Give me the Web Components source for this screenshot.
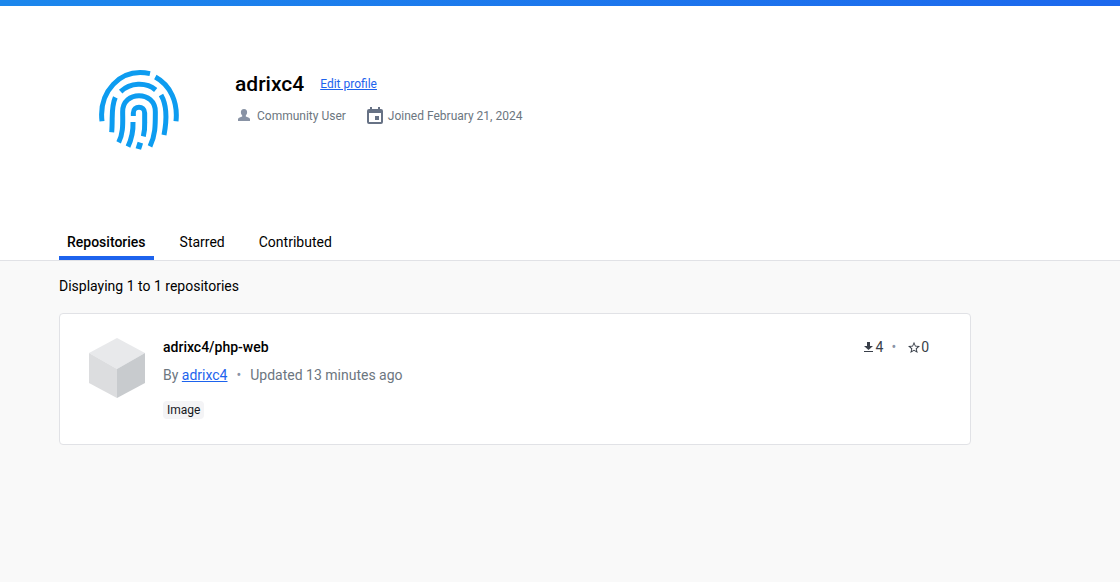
<!DOCTYPE html>
<html lang="en">
<head>
<meta charset="utf-8">
<title>adrixc4's Profile</title>
<style>
html{height:100%}
body{margin:0;min-height:100%;background:#f9f9f9;color:#000;font-family:Roboto,"Liberation Sans",sans-serif;font-size:14px;line-height:20px}
</style>
</head>
<body>
<profile-page></profile-page>
<script>
const define = (name, html) => {
  const template = document.createElement('template');
  template.innerHTML = html;
  customElements.define(name, class extends HTMLElement {
    constructor() {
      super();
      this.attachShadow({ mode: 'open' }).append(template.content.cloneNode(true));
    }
  });
};

define('user-avatar', `
<style>:host{display:block;width:80px;height:80px}svg{display:block;width:100%;height:100%}</style>
<svg viewBox="27 30 240 240" fill="none" stroke="#0d9cf0" stroke-width="15" role="img" aria-label="Fingerprint">
  <path d="M36 184 C26 98 88 22 180 41"/>
  <path d="M196 51 C242 76 264 127 258 184"/>
  <path d="M92 95 C120 68 168 65 197 90"/>
  <path d="M76 112 C62 142 69 173 65 217"/>
  <path d="M213 105 C232 137 231 178 222 225"/>
  <path d="M86 247 C101 218 98 187 98 155 C98 91 196 91 196 155 C196 192 197 225 180 259"/>
  <path d="M114 260 C127 232 130 212 129 186"/>
  <path d="M130 168 V159 C130 136 164 136 164 159 V188 Q165 210 160 229"/>
  <path d="M151 248 L145 267" stroke-width="17"/>
</svg>`);

define('profile-header', `
<style>
:host{display:flex;gap:56px;padding:64px 40px 72px}
.info{display:flex;flex-direction:column;gap:8px}
.line{display:flex;align-items:center;gap:16px}
h1{margin:0;font-size:21px;line-height:28px;font-weight:500}
a{color:#1d63ed;font-size:12px}
.meta{gap:20px;font-size:12px;color:#6c7680}
.meta span{display:flex;align-items:center;gap:4px}
svg{display:block;width:18px;height:18px}
</style>
<user-avatar></user-avatar>
<div class="info">
  <div class="line"><h1><slot name="name"></slot></h1><a href="#edit">Edit profile</a></div>
  <div class="line meta">
    <span><svg viewBox="0 0 18 18" fill="#8993a5" aria-hidden="true"><path d="M9 2c2.200 0 3.300 1.600 3.100 3.500-.1 1.300-.6 2.200-1.300 2.900v1.200c1.600.7 3.700 1.200 4.200 2.400V14H3v-2c.5-1.200 2.600-1.700 4.200-2.400V8.400C6.500 7.700 6 6.800 5.900 5.500 5.700 3.600 6.800 2 9 2z"/></svg><slot name="role"></slot></span>
    <span><svg viewBox="0 0 18 18" fill="#677285" aria-hidden="true"><path fill-rule="evenodd" d="M4 0h2v2h6V0h2v2h1q2 0 2 2v11q0 2-2 2H3q-2 0-2-2V4q0-2 2-2h1zM3 6v9h12V6zM9 9h4v4H9z"/></svg><slot name="joined"></slot></span>
  </div>
</div>`);

define('profile-tabs', `
<style>
:host{display:block}
nav{display:flex;gap:18px}
a{padding:10px 8px 4px;border-bottom:4px solid transparent;color:#000;text-decoration:none;line-height:20px}
a[aria-current]{font-weight:500;border-color:#1d63ed}
</style>
<nav aria-label="Profile"><a href="#repositories" aria-current="page">Repositories</a><a href="#starred">Starred</a><a href="#contributed">Contributed</a></nav>`);

define('repo-card', `
<style>
:host{display:flex;gap:16px;padding:23px 41px 25px 27px;border:1px solid #e1e2e6;border-radius:4px;background:#fff}
.cube{width:60px;height:62px;flex:none}
.main{flex:1;display:flex;flex-direction:column;align-items:flex-start}
h2{margin:0;font-size:14px;line-height:20px;font-weight:500}
p{margin:8px 0 0;color:#6c7680;line-height:20px}
p a{color:#1d63ed}
.dot{color:#8993a5;margin:0 9px}
.tag{margin-top:16px;padding:0 4px;border-radius:4px;background:#f4f4f6;color:#17191e;font-size:12px;line-height:18px}
.stats{display:flex;align-items:center;height:20px;color:#393f49}
.stats svg{width:12px;height:12px}
.stats span{display:flex;align-items:center;gap:1px}
.stats .dot{margin:0 12px 0 8px}
</style>
<svg class="cube" viewBox="0 0 60 62" aria-hidden="true"><path fill="#e8e9eb" d="M30 1l28 15-28 16L2 16z"/><path fill="#dcdddf" d="M2 16l28 16v29L2 46z"/><path fill="#c8cbce" d="M58 16L30 32v29l28-15z"/></svg>
<div class="main">
  <h2><slot name="title"></slot></h2>
  <p>By <a href="#adrixc4"><slot name="owner"></slot></a><span class="dot">•</span><slot name="updated"></slot></p>
  <span class="tag"><slot name="kind"></slot></span>
</div>
<div class="stats">
  <span><svg viewBox="0 0 12 12" fill="#393f49" aria-hidden="true"><path d="M4 1h3v4h3L5.500 9 1 5h3zM1 10h9v1H1z"/></svg><slot name="downloads"></slot></span>
  <span class="dot">•</span>
  <span><svg viewBox="0 0 24 24" fill="#393f49" aria-hidden="true"><path d="M24 10.200l-8.600-.7L12 1.500 8.600 9.500 0 10.200l6.500 5.700L4.600 24 12 19.700 19.400 24l-1.900-8.100zM12 17.400l-4.500 2.700 1.200-5.100-4-3.400 5.200-.5L12 6.200l2.100 4.900 5.200.5-4 3.400 1.200 5.100z"/></svg><slot name="stars"></slot></span>
</div>`);

define('profile-page', `
<style>
:host{display:block}
header{background:#fff;border-top:6px solid;border-image:linear-gradient(90deg,#1c87ec,#1d68ed) 1;border-right:0;border-left:0;border-bottom:0}
.tabs{background:#fff;border-bottom:1px solid #e1e2e6}
.wrap{max-width:912px;margin:0 auto 0 59px}
main.wrap{padding:15px 0;margin-right:40px}
main p{margin:0 0 17px;line-height:20px}
</style>
<header><div class="wrap">
  <profile-header><span slot="name">adrixc4</span><span slot="role">Community User</span><span slot="joined">Joined February 21, 2024</span></profile-header>
</div></header>
<div class="tabs"><div class="wrap"><profile-tabs></profile-tabs></div></div>
<main class="wrap">
  <p>Displaying 1 to 1 repositories</p>
  <repo-card><span slot="title">adrixc4/php-web</span><span slot="owner">adrixc4</span><span slot="updated">Updated 13 minutes ago</span><span slot="kind">Image</span><span slot="downloads">4</span><span slot="stars">0</span></repo-card>
</main>`);
</script>
</body>
</html>
